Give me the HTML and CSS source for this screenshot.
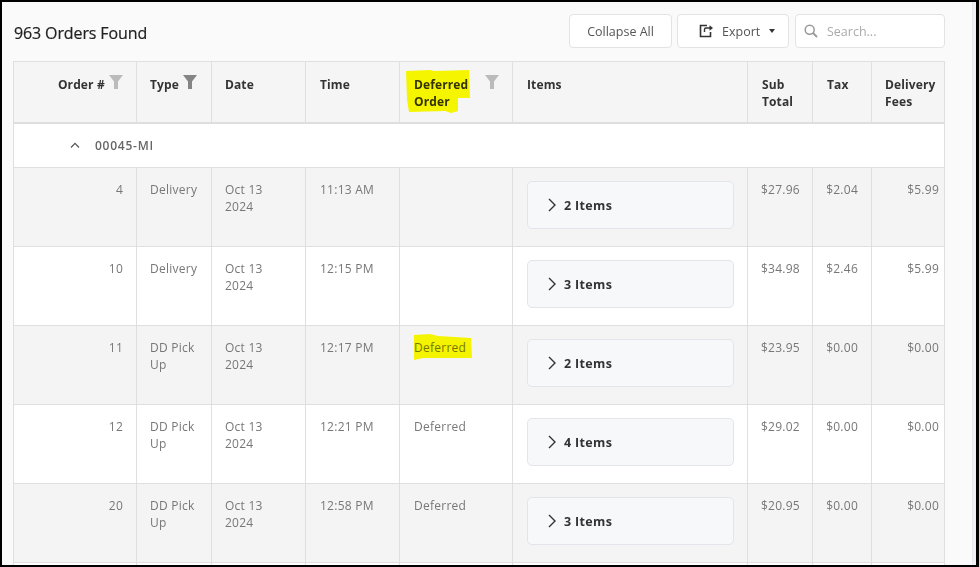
FILE: index.html
```html
<!DOCTYPE html>
<html lang="en">
<head>
<meta charset="utf-8">
<title>Orders</title>
<link rel="stylesheet" href="styles.css">
</head>
<body>
<div class="frame">
  <main class="main">
    <header class="toolbar">
      <h1 class="title">963 Orders Found</h1>
      <div class="tools">
        <button class="btn btn-collapse">Collapse All</button>
        <button class="btn btn-export">
          <svg class="export-icon" width="15" height="14" viewBox="0 0 15 14"><path d="M8 1.500H1.500v11h10V8" fill="none" stroke="#333" stroke-width="1.600"/><path d="M5.500 8V5.500a1.500 1.500 0 0 1 1.500-1.500h5" fill="none" stroke="#333" stroke-width="1.400"/><path d="M10.500 1.200 14 4l-3.500 2.800z" fill="#333"/></svg>
          <span>Export</span>
          <i class="caret"></i>
        </button>
        <label class="search">
          <svg width="14" height="14" viewBox="0 0 14 14"><circle cx="5.700" cy="5.700" r="4.500" fill="none" stroke="#999" stroke-width="1.500"/><path d="M9 9l4 4" stroke="#999" stroke-width="1.800"/></svg>
          <span>Search...</span>
        </label>
      </div>
    </header>
    <table class="orders">
      <colgroup>
        <col class="c1"><col class="c2"><col class="c3"><col class="c3"><col class="c5"><col class="c6"><col class="c7"><col class="c8"><col class="c9">
      </colgroup>
      <thead>
        <tr>
          <th class="num-head">Order # <svg class="filter" width="14" height="14" viewBox="0 0 14 14"><path d="M0 0h14L9 6.500V14H5V6.500z" fill="#bbb"/></svg></th>
          <th>Type <svg class="filter" width="14" height="14" viewBox="0 0 14 14"><path d="M0 0h14L9 6.500V14H5V6.500z" fill="#858585"/></svg></th>
          <th>Date</th>
          <th class="wide">Time</th>
          <th class="wide has-mark">
            <svg class="filter filter-right" width="14" height="14" viewBox="0 0 14 14"><path d="M0 0h14L9 6.500V14H5V6.500z" fill="#bbb"/></svg>
            Deferred<br>Order
            <svg class="mark mark-head" width="64" height="43" viewBox="0 0 64 43"><path d="M0 1 24 0l4 1 35-1 1 28-12 0 0 13-7 2-6-2-36 1L1 30z" fill="#ffff00"/></svg>
          </th>
          <th class="wide">Items</th>
          <th class="wide">Sub<br>Total</th>
          <th class="wide">Tax</th>
          <th>Delivery<br>Fees</th>
        </tr>
      </thead>
      <tbody>
        <tr class="group">
          <td colspan="9"><svg class="up" width="10" height="6" viewBox="0 0 10 6"><path d="M1 5.500 5 1.300l4 4.200" fill="none" stroke="#555" stroke-width="1.200"/></svg><span>00045-MI</span></td>
        </tr>
        <tr class="row alt">
          <td class="num">4</td><td>Delivery</td><td>Oct 13<br>2024</td><td class="wide">11:13 AM</td><td class="wide"></td>
          <td class="wide"><div class="items"><svg width="8" height="14" viewBox="0 0 8 14"><path d="M1 1l6 6-6 6" fill="none" stroke="#333" stroke-width="1.400"/></svg><span>2 Items</span></div></td>
          <td class="money">$27.96</td><td class="money">$2.04</td><td class="money last">$5.99</td>
        </tr>
        <tr class="row">
          <td class="num">10</td><td>Delivery</td><td>Oct 13<br>2024</td><td class="wide">12:15 PM</td><td class="wide"></td>
          <td class="wide"><div class="items"><svg width="8" height="14" viewBox="0 0 8 14"><path d="M1 1l6 6-6 6" fill="none" stroke="#333" stroke-width="1.400"/></svg><span>3 Items</span></div></td>
          <td class="money">$34.98</td><td class="money">$2.46</td><td class="money last">$5.99</td>
        </tr>
        <tr class="row alt">
          <td class="num">11</td><td>DD Pick<br>Up</td><td>Oct 13<br>2024</td><td class="wide">12:17 PM</td>
          <td class="wide has-mark">Deferred<svg class="mark mark-cell" width="59" height="26" viewBox="0 0 59 26"><path d="M1 1 17 0l8 2 33 2 1 20-25 0-16 0-8 0-9 2z" fill="#ffff00"/></svg></td>
          <td class="wide"><div class="items"><svg width="8" height="14" viewBox="0 0 8 14"><path d="M1 1l6 6-6 6" fill="none" stroke="#333" stroke-width="1.400"/></svg><span>2 Items</span></div></td>
          <td class="money">$23.95</td><td class="money">$0.00</td><td class="money last">$0.00</td>
        </tr>
        <tr class="row">
          <td class="num">12</td><td>DD Pick<br>Up</td><td>Oct 13<br>2024</td><td class="wide">12:21 PM</td><td class="wide">Deferred</td>
          <td class="wide"><div class="items"><svg width="8" height="14" viewBox="0 0 8 14"><path d="M1 1l6 6-6 6" fill="none" stroke="#333" stroke-width="1.400"/></svg><span>4 Items</span></div></td>
          <td class="money">$29.02</td><td class="money">$0.00</td><td class="money last">$0.00</td>
        </tr>
        <tr class="row alt">
          <td class="num">20</td><td>DD Pick<br>Up</td><td>Oct 13<br>2024</td><td class="wide">12:58 PM</td><td class="wide">Deferred</td>
          <td class="wide"><div class="items"><svg width="8" height="14" viewBox="0 0 8 14"><path d="M1 1l6 6-6 6" fill="none" stroke="#333" stroke-width="1.400"/></svg><span>3 Items</span></div></td>
          <td class="money">$20.95</td><td class="money">$0.00</td><td class="money last">$0.00</td>
        </tr>
        <tr class="row">
          <td></td><td></td><td></td><td></td><td></td><td></td><td></td><td></td><td></td>
        </tr>
      </tbody>
    </table>
  </main>
  <div class="rail"></div>
</div>
</body>
</html>
```
FILE: styles.css
```css
* { box-sizing: border-box; }
html, body { margin: 0; padding: 0; }
body { width: 979px; height: 567px; overflow: hidden; font-family: "Open Sans", "Noto Sans", sans-serif; }
.frame {
  width: 979px; height: 567px; display: flex; overflow: hidden;
  border-style: solid; border-color: #000; border-width: 2px 3px 2px 2px;
  background: #fafafa;
}
.main { width: 970px; flex: none; padding: 12px 0 0 11px; overflow: hidden; }
.rail { flex: 1; background: #eef1f5; border-left: 1px solid #e6e8ec; }
.toolbar { width: 932px; height: 34px; display: flex; align-items: center; justify-content: space-between; }
.title { margin: 0 0 -3px 1px; font-size: 16px; font-weight: 400; color: #222; letter-spacing: -.12px; -webkit-text-stroke: .2px #222; }
.tools { display: flex; gap: 5px; }
.btn, .search {
  height: 34px; background: #fff; border: 1px solid #e3e3e3; border-radius: 4px;
  display: flex; align-items: center; font-family: inherit; font-size: 12.500px; color: #555; padding: 0;
}
.btn-collapse { width: 103px; justify-content: center; }
.btn-export { width: 112px; padding-left: 21px; color: #555; margin-right: 1px; }
.export-icon { margin-right: 8px; }
.caret { margin-left: 9px; border: 3.500px solid transparent; border-top: 4px solid #333; border-bottom: 0; }
.search { width: 150px; padding-left: 8px; gap: 9px; color: #aaa; }
.orders {
  margin-top: 13px; width: 931px; table-layout: fixed; border-collapse: collapse;
  font-size: 12px; color: #777; letter-spacing: .25px; background: #fff;
}
.c1 { width: 123px; } .c2 { width: 75px; } .c3 { width: 94px; } .c5 { width: 113px; }
.c6 { width: 235px; } .c7 { width: 65px; } .c8 { width: 59px; } .c9 { width: 73px; }
.orders th, .orders td { border: 1px solid #dfdfdf; vertical-align: top; padding: 13px 6px 0 13px; line-height: 17px; }
.orders th {
  height: 61px; padding-top: 14px; text-align: left; font-weight: 700; color: #333; background: #f5f5f5;
  border-bottom: 2px solid #dedede; letter-spacing: .12px; white-space: nowrap;
}
.orders th.num-head { text-align: right; padding-right: 13px; }
.orders th.wide, .orders td.wide { padding-left: 14px; }
.filter { vertical-align: top; margin: -1px 0 0 1px; }
.filter-right { float: right; margin: -1px 7px 0 0; }
.group td { height: 45px; padding: 13px 0 0 56px; font-weight: 600; color: #666; letter-spacing: .75px; font-size: 12px; }
.up { margin-right: 15px; vertical-align: 2px; }
.row { height: 79px; }
.alt td { background: #f4f4f4; }
.orders td.num { text-align: right; padding-right: 13px; }
.orders td.money { text-align: right; padding-right: 13px; }
.orders td.last { padding-right: 5px; }
.items {
  width: 207px; height: 48px; display: flex; align-items: center; gap: 8px; padding-left: 20px;
  background: #f7f8fa; border: 1px solid #e3e5ea; border-radius: 5px;
  font-weight: 700; font-size: 12.500px; color: #333; letter-spacing: .35px;
}
.has-mark { position: relative; }
.mark { position: absolute; mix-blend-mode: multiply; pointer-events: none; }
.mark-head { left: 6px; top: 8px; }
.mark-cell { left: 13px; top: 8px; }
```
